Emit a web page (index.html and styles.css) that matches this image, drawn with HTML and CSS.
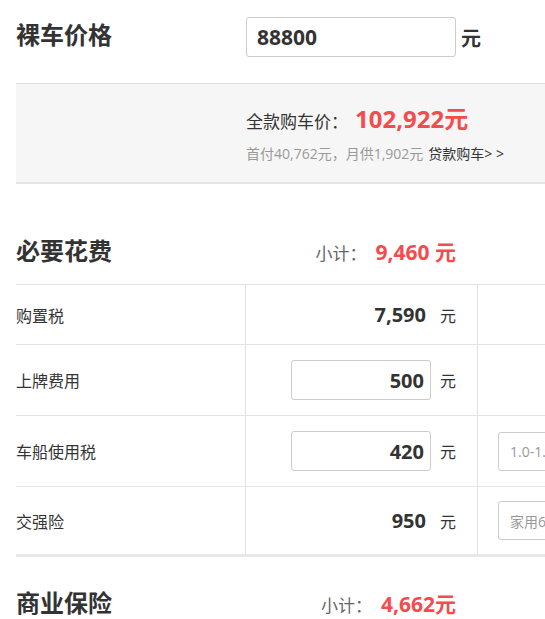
FILE: index.html
```html
<!DOCTYPE html>
<html lang="zh-CN">
<head>
<meta charset="utf-8">
<title>购车计算器</title>
<link rel="stylesheet" href="styles.css">
</head>
<body>
<div class="page">
  <div class="price-row">
    <h2 class="title price-title">裸车价格</h2>
    <input class="price-input" type="text" value="88800">
    <span class="price-unit">元</span>
  </div>

  <div class="total-box">
    <div class="total-line"><span class="total-label">全款购车价：</span><span class="total-value">102,922元</span></div>
    <div class="loan-line"><span class="loan-text">首付40,762元，月供1,902元</span><a class="loan-link" href="#">贷款购车&gt; &gt;</a></div>
  </div>

  <div class="section-head section-first">
    <h2 class="title">必要花费</h2>
    <div class="subtotal"><span class="subtotal-label">小计：</span><span class="subtotal-value">9,460 元</span></div>
  </div>

  <div class="table">
    <div class="row row-plain">
      <div class="cell name">购置税</div>
      <div class="cell amount"><span class="amount-value">7,590</span><span class="unit">元</span></div>
      <div class="cell extra"></div>
    </div>
    <div class="row row-input">
      <div class="cell name">上牌费用</div>
      <div class="cell amount"><input class="amount-input" type="text" value="500"><span class="unit">元</span></div>
      <div class="cell extra"></div>
    </div>
    <div class="row row-input">
      <div class="cell name">车船使用税</div>
      <div class="cell amount"><input class="amount-input" type="text" value="420"><span class="unit">元</span></div>
      <div class="cell extra"><div class="select">1.0-1.6L(含)</div></div>
    </div>
    <div class="row row-last">
      <div class="cell name">交强险</div>
      <div class="cell amount"><span class="amount-value">950</span><span class="unit">元</span></div>
      <div class="cell extra"><div class="select">家用6座以下</div></div>
    </div>
  </div>

  <div class="section-head section-second">
    <h2 class="title">商业保险</h2>
    <div class="subtotal"><span class="subtotal-label">小计：</span><span class="subtotal-value">4,662元</span></div>
  </div>
</div>
</body>
</html>
```

FILE: styles.css
```css
html, body {
  margin: 0;
  padding: 0;
  overflow: hidden;
  background: #fff;
}

body {
  font-family: "Open Sans", "Noto Sans CJK SC", sans-serif;
  color: #333;
}

.page {
  width: 800px;
  padding-left: 16px;
}

.title {
  margin: 0;
  font-family: "Noto Sans CJK SC", sans-serif;
  font-size: 24px;
  line-height: 34px;
  font-weight: 700;
  color: #333;
}

/* top price row */
.price-row {
  display: flex;
  align-items: center;
  height: 40px;
  padding-top: 17px;
}

.price-title {
  width: 230px;
  margin-bottom: 7px;
}

.price-input {
  box-sizing: border-box;
  width: 210px;
  height: 40px;
  border: 1px solid #ccc;
  border-radius: 3px;
  padding: 0 10px;
  margin: 0;
  font-family: "Open Sans", "Noto Sans CJK SC", sans-serif;
  font-size: 21px;
  font-weight: 700;
  color: #333;
  background: #fff;
  outline: none;
}

.price-unit {
  margin-left: 5px;
  font-family: "Noto Sans CJK SC", sans-serif;
  font-size: 20px;
  font-weight: 700;
  color: #333;
}

/* total box */
.total-box {
  box-sizing: border-box;
  height: 101px;
  margin-top: 26px;
  border-top: 1px solid #e0e0e0;
  border-bottom: 2px solid #e4e4e4;
  background: #f6f6f6;
  padding: 23px 0 0 230px;
}

.total-line {
  height: 30px;
  font-size: 17px;
  line-height: 30px;
  color: #333;
}

.total-value {
  margin-left: 7px;
  font-size: 24px;
  line-height: 1;
  font-weight: 700;
  color: #f54b4e;
}

.loan-line {
  margin-top: 7px;
  font-size: 14px;
  line-height: 20px;
}

.loan-text {
  color: #999;
}

.loan-link {
  margin-left: 5px;
  color: #333;
  text-decoration: none;
}

/* section headers */
.section-head {
  box-sizing: border-box;
  width: 461px;
  display: flex;
  justify-content: space-between;
  align-items: baseline;
  padding: 0 21px 0 0;
}

.section-first {
  height: 100px;
  padding-top: 49px;
}

.section-second {
  padding-top: 28px;
}

.subtotal {
  font-size: 17px;
  line-height: 24px;
}

.subtotal-label {
  color: #666;
}

.subtotal-value {
  margin-left: 9px;
  font-size: 21px;
  font-weight: 700;
  color: #f54b4e;
}

/* table */
.table {
  border-top: 1px solid #e3e3e3;
}

.row {
  display: grid;
  grid-template-columns: 229px 232px 1fr;
  border-bottom: 1px solid #e3e3e3;
}

.row-plain {
  height: 59px;
}

.row-input {
  height: 70px;
}

.row-last {
  height: 67px;
  border-bottom: 3px solid #e8e8e8;
}

.cell {
  display: flex;
  align-items: center;
}

.name {
  font-size: 16px;
  color: #333;
}

.amount {
  justify-content: flex-end;
  border-left: 1px solid #e3e3e3;
  padding-right: 21px;
}

.extra {
  border-left: 1px solid #e3e3e3;
  padding-left: 20px;
}

.amount-value {
  padding-right: 5px;
  font-size: 20px;
  font-weight: 700;
  color: #333;
}

.amount-input {
  box-sizing: border-box;
  width: 140px;
  height: 40px;
  margin: 0;
  border: 1px solid #ccc;
  border-radius: 3px;
  padding: 0 6px;
  text-align: right;
  font-family: "Open Sans", "Noto Sans CJK SC", sans-serif;
  font-size: 20px;
  font-weight: 700;
  color: #333;
  background: #fff;
  outline: none;
}

.unit {
  margin-left: 9px;
  font-size: 16px;
  color: #333;
}

.select {
  box-sizing: border-box;
  display: flex;
  align-items: center;
  width: 140px;
  height: 39px;
  border: 1px solid #ccc;
  border-radius: 3px;
  padding-left: 11px;
  font-size: 14px;
  color: #999;
  white-space: nowrap;
}
```
